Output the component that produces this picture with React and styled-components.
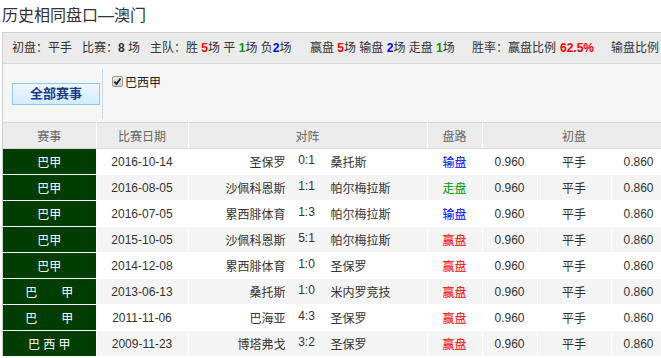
import React from "react";
import styled, { createGlobalStyle } from "styled-components";

const GlobalStyle = createGlobalStyle`
  body {
    margin: 0;
    overflow: hidden;
    background: #fff;
    font-family: "Liberation Sans", "Noto Sans CJK SC", sans-serif;
    font-size: 12px;
    color: #333;
  }
`;

const rows = [
  { league: "巴甲", date: "2016-10-14", home: "圣保罗", score: "0:1", away: "桑托斯", result: "输盘" },
  { league: "巴甲", date: "2016-08-05", home: "沙佩科恩斯", score: "1:1", away: "帕尔梅拉斯", result: "走盘" },
  { league: "巴甲", date: "2016-07-05", home: "累西腓体育", score: "1:3", away: "帕尔梅拉斯", result: "输盘" },
  { league: "巴甲", date: "2015-10-05", home: "沙佩科恩斯", score: "5:1", away: "帕尔梅拉斯", result: "赢盘" },
  { league: "巴甲", date: "2014-12-08", home: "累西腓体育", score: "1:0", away: "圣保罗", result: "赢盘" },
  { league: "巴　　甲", date: "2013-06-13", home: "桑托斯", score: "1:0", away: "米内罗竞技", result: "赢盘" },
  { league: "巴　　甲", date: "2011-11-06", home: "巴海亚", score: "4:3", away: "圣保罗", result: "赢盘" },
  { league: "巴 西 甲", date: "2009-11-23", home: "博塔弗戈", score: "3:2", away: "圣保罗", result: "赢盘" },
];

const resultColors = { 输盘: "#0000ff", 走盘: "#009900", 赢盘: "#ff0000" };

const App = () => {
  return (
    <Page>
      <GlobalStyle />
      <Title>历史相同盘口—澳门</Title>
      <Panel>
        <StatBar>
          <Group $w={70}>初盘：平手</Group>
          <Group $w={68}>
            比赛：<Num>8</Num> 场
          </Group>
          <Group $w={160}>
            主队：胜 <Num color="#ff0000">5</Num>场 平 <Num color="#009900">1</Num>场 负<Num color="#0000ff">2</Num>场
          </Group>
          <Group $w={162}>
            赢盘 <Num color="#ff0000">5</Num>场 输盘 <Num color="#0000ff">2</Num>场 走盘 <Num color="#009900">1</Num>场
          </Group>
          <Group $w={88}>胜率：赢盘比例</Group>
          <Group $w={51}>
            <Num color="#ff0000">62.5%</Num>
          </Group>
          <Group>输盘比例</Group>
        </StatBar>
        <Filter>
          <ButtonCol>
            <AllButton>全部赛事</AllButton>
          </ButtonCol>
          <Divider />
          <CheckLabel>
            <CheckBox>
              <svg width="9" height="9" viewBox="0 0 9 9">
                <path d="M1.5 4.5 L3.5 7 L7.5 1.5" fill="none" stroke="#222" strokeWidth="1.8" />
              </svg>
            </CheckBox>
            巴西甲
          </CheckLabel>
        </Filter>
        <Table>
          <colgroup>
            <col style={{ width: 93 }} />
            <col style={{ width: 92 }} />
            <col style={{ width: 239 }} />
            <col style={{ width: 55 }} />
            <col style={{ width: 55 }} />
            <col style={{ width: 74 }} />
            <col style={{ width: 55 }} />
          </colgroup>
          <thead>
            <tr>
              <Th>赛事</Th>
              <Th>比赛日期</Th>
              <Th>对阵</Th>
              <Th>盘路</Th>
              <Th colSpan={3}>初盘</Th>
            </tr>
          </thead>
          <tbody>
            {rows.map((r, i) => (
              <Row key={i} $alt={i % 2 === 1}>
                <League>{r.league}</League>
                <Td>{r.date}</Td>
                <Td>
                  <Match>
                    <Home>{r.home}</Home>
                    <Score>{r.score}</Score>
                    <Away>{r.away}</Away>
                  </Match>
                </Td>
                <Td>
                  <Result color={resultColors[r.result]}>{r.result}</Result>
                </Td>
                <Td>0.960</Td>
                <Td>平手</Td>
                <Td>0.860</Td>
              </Row>
            ))}
          </tbody>
        </Table>
      </Panel>
    </Page>
  );
};

const Page = styled.div`
  padding-left: 2px;
`;

const Title = styled.div`
  height: 32px;
  line-height: 24px;
  padding-top: 4px;
  box-sizing: border-box;
  font-size: 16px;
  color: #333;
  white-space: nowrap;
`;

const Panel = styled.div`
  width: 720px;
  border-left: 1px solid #cfcfcf;
`;

const StatBar = styled.div`
  display: flex;
  height: 30px;
  line-height: 30px;
  padding-left: 9px;
  background: #ebebeb;
  border-top: 1px solid #cfcfcf;
  border-bottom: 1px solid #d8d8d8;
  white-space: nowrap;
  color: #333;
`;

const Group = styled.span`
  flex: none;
  width: ${(p) => (p.$w ? `${p.$w}px` : "auto")};
`;

const Num = styled.b`
  color: ${(p) => p.color || "#333"};
`;

const Filter = styled.div`
  display: flex;
  height: 58px;
  background: #f5f5f5;
`;

const ButtonCol = styled.div`
  display: flex;
  align-items: center;
  width: 99px;
  padding-left: 9px;
  padding-top: 2px;
  box-sizing: border-box;
`;

const AllButton = styled.div`
  width: 88px;
  height: 22px;
  box-sizing: border-box;
  border: 1px solid #8ccaf2;
  background: linear-gradient(#eef7ff, #d4eafc);
  color: #1a3c8c;
  font-weight: bold;
  font-size: 13px;
  line-height: 20px;
  text-align: center;
`;

const Divider = styled.div`
  width: 1px;
  margin: 5px 0 3px;
  background: #c6dcef;
`;

const CheckLabel = styled.label`
  display: flex;
  align-items: center;
  gap: 2px;
  height: 14px;
  margin: 10px 0 0 9px;
  font-size: 12px;
  color: #222;
`;

const CheckBox = styled.span`
  display: flex;
  align-items: center;
  justify-content: center;
  width: 11px;
  height: 11px;
  box-sizing: border-box;
  border: 1px solid #9a9a9a;
  border-radius: 2px;
  background: linear-gradient(#eaeaea, #cfcfcf);
`;

const Table = styled.table`
  border-collapse: collapse;
  table-layout: fixed;
  width: 663px;
`;

const Th = styled.th`
  height: 25px;
  padding: 0;
  background: #ebebeb;
  border-top: 1px solid #d8d8d8;
  border-bottom: 1px solid #dcdcdc;
  border-right: 1px solid #fff;
  font-weight: normal;
  font-size: 12px;
  color: #666;
  text-align: center;
`;

const Row = styled.tr`
  background: ${(p) => (p.$alt ? "#f4f4f4" : "#fff")};
`;

const Td = styled.td`
  height: 25px;
  padding: 0;
  border-right: 1px solid #fff;
  border-bottom: 1px solid #fff;
  text-align: center;
  white-space: nowrap;
  color: #333;
`;

const League = styled(Td)`
  background: #003d00;
  color: #fff;
  white-space: pre;
`;

const Match = styled.div`
  display: grid;
  grid-template-columns: 97px 42px 1fr;
`;

const Home = styled.span`
  text-align: right;
`;

const Score = styled.span`
  text-align: center;
`;

const Away = styled.span`
  text-align: left;
  padding-left: 3px;
`;

const Result = styled.span`
  color: ${(p) => p.color};
`;

export default App;
